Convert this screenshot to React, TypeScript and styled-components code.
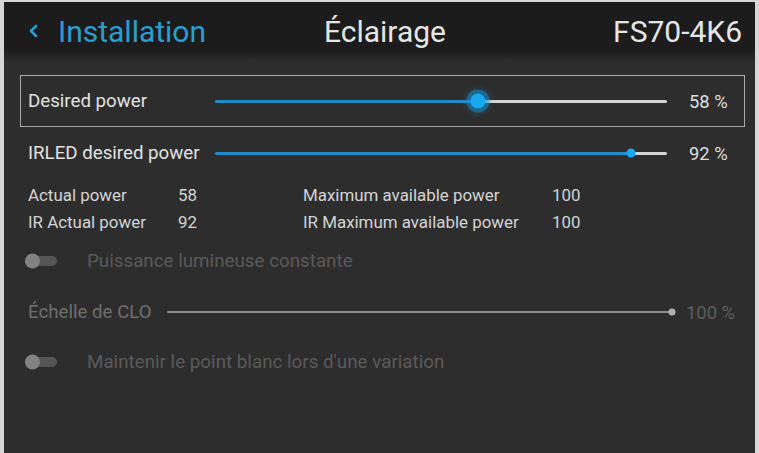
import React from "react";
import styled, { createGlobalStyle } from "styled-components";

const Global = createGlobalStyle`
  html, body { margin: 0; padding: 0; background: #d9d9d9; }
  body { font-family: Roboto, "Noto Sans", "Liberation Sans", sans-serif; }
`;

const Frame = styled.div`
  width: 759px;
  height: 453px;
  padding: 2px 4px 0 4px;
  box-sizing: border-box;
  background: #d6d6d6;
`;

const Screen = styled.div`
  height: 451px;
  background: #2d2d2d;
  display: flex;
  flex-direction: column;
  overflow: hidden;
`;

const Header = styled.header`
  height: 60px;
  flex: none;
  display: grid;
  grid-template-columns: 1fr auto 1fr;
  align-items: center;
  padding: 0 13px 2px 24px;
  box-sizing: border-box;
  background: linear-gradient(#1c1c1c 0, #1c1c1c 48px, #2d2d2d 60px);
`;

const Back = styled.div`
  display: flex;
  align-items: center;
  gap: 20px;
  color: #2b9dd4;
  font-size: 30px;
`;

const Title = styled.div`
  color: #e6e6e6;
  font-size: 30px;
`;

const Model = styled.div`
  justify-self: end;
  color: #e6e6e6;
  font-size: 30px;
`;

const Content = styled.div`
  padding: 13px 10px 0 16px;
  display: flex;
  flex-direction: column;
`;

const SliderRow = styled.div<{ $focused?: boolean; $labelW: number; $valueW: number; $h: number }>`
  height: ${(p) => p.$h}px;
  box-sizing: border-box;
  border: 1px solid ${(p) => (p.$focused ? "#a8a8a8" : "transparent")};
  display: grid;
  grid-template-columns: ${(p) => p.$labelW}px 1fr ${(p) => p.$valueW}px;
  align-items: center;
  padding: 0 0 0 7px;
`;

const Label = styled.span<{ $dim?: boolean }>`
  font-size: 18.7px;
  color: ${(p) => (p.$dim ? "#6e6e6e" : "#e2e2e2")};
  white-space: nowrap;
`;

const Value = styled.span<{ $dim?: boolean; $gap: number }>`
  font-size: 18.4px;
  padding-left: ${(p) => p.$gap}px;
  color: ${(p) => (p.$dim ? "#5e5e5e" : "#dedede")};
  white-space: nowrap;
`;

const Track = styled.div<{ $h: number }>`
  position: relative;
  height: ${(p) => p.$h}px;
  display: flex;
`;

const Fill = styled.div<{ $color: string }>`
  height: 100%;
  background: ${(p) => p.$color};
  border-radius: 2px;
`;

const Rest = styled.div<{ $color: string }>`
  flex: 1;
  height: 100%;
  background: ${(p) => p.$color};
  border-radius: 2px;
`;

const Thumb = styled.div<{ $size: number; $color: string; $glow?: boolean }>`
  position: absolute;
  top: 50%;
  width: ${(p) => p.$size}px;
  height: ${(p) => p.$size}px;
  border-radius: 50%;
  background: ${(p) => p.$color};
  transform: translate(-50%, -50%);
  box-shadow: ${(p) => (p.$glow ? "0 0 0 4px rgba(20,150,220,0.45), 0 0 6px 5px rgba(20,150,220,0.25)" : "none")};
`;

type SliderProps = {
  pct: number;
  fill: string;
  rest: string;
  thumb: string;
  size: number;
  h: number;
  glow?: boolean;
};

const Slider = ({ pct, fill, rest, thumb, size, h, glow }: SliderProps) => (
  <Track $h={h}>
    <Fill $color={fill} style={{ width: `${pct}%` }} />
    <Rest $color={rest} />
    <Thumb $size={size} $color={thumb} $glow={glow} style={{ left: `${pct}%` }} />
  </Track>
);

const InfoGrid = styled.div`
  display: grid;
  grid-template-columns: 150px 125px 249px auto;
  grid-auto-rows: 27px;
  align-items: center;
  padding: 2px 0 0 8px;
  margin-bottom: 7px;
`;

const Info = styled.span`
  font-size: 16.9px;
  color: #d4d4d4;
  white-space: nowrap;
`;

const ToggleRow = styled.div<{ $h: number }>`
  height: ${(p) => p.$h}px;
  display: flex;
  align-items: center;
  gap: 30px;
  padding-left: 5px;
`;

const Switch = styled.div`
  position: relative;
  width: 32px;
  height: 10px;
  border-radius: 5px;
  background: #555555;
  &::before {
    content: "";
    position: absolute;
    left: 0;
    top: 50%;
    width: 15px;
    height: 15px;
    border-radius: 50%;
    background: #828282;
    transform: translateY(-50%);
  }
`;

const DimText = styled.span`
  font-size: 18.8px;
  color: #5a5a5a;
  white-space: nowrap;
`;

const Chevron = () => (
  <svg width="10" height="14" viewBox="0 0 10 14">
    <path d="M8 2 L3 7 L8 12" fill="none" stroke="#2b9dd4" strokeWidth="2.6" strokeLinecap="round" strokeLinejoin="round" />
  </svg>
);

export default function App() {
  return (
    <>
      <Global />
      <Frame>
        <Screen>
          <Header>
            <Back>
              <Chevron />
              <span>Installation</span>
            </Back>
            <Title>Éclairage</Title>
            <Model>FS70-4K6</Model>
          </Header>
          <Content>
            <SliderRow $focused $labelW={187} $valueW={77} $h={52}>
              <Label>Desired power</Label>
              <Slider pct={58.2} fill="#1e8cc6" rest="#d4d4d4" thumb="#17a8f2" size={15} h={3} glow />
              <Value $gap={22}>58 %</Value>
            </SliderRow>
            <SliderRow $labelW={187} $valueW={77} $h={52}>
              <Label>IRLED desired power</Label>
              <Slider pct={92} fill="#1e8cc6" rest="#d4d4d4" thumb="#17a8f2" size={9} h={3} />
              <Value $gap={22}>92 %</Value>
            </SliderRow>
            <InfoGrid>
              <Info>Actual power</Info>
              <Info>58</Info>
              <Info>Maximum available power</Info>
              <Info>100</Info>
              <Info>IR Actual power</Info>
              <Info>92</Info>
              <Info>IR Maximum available power</Info>
              <Info>100</Info>
            </InfoGrid>
            <ToggleRow $h={38}>
              <Switch />
              <DimText>Puissance lumineuse constante</DimText>
            </ToggleRow>
            <SliderRow $labelW={139} $valueW={72} $h={64}>
              <Label $dim>Échelle de CLO</Label>
              <Slider pct={100} fill="#8c8c8c" rest="#8c8c8c" thumb="#b0b0b0" size={7} h={2} />
              <Value $dim $gap={14}>100 %</Value>
            </SliderRow>
            <ToggleRow $h={36}>
              <Switch />
              <DimText>Maintenir le point blanc lors d'une variation</DimText>
            </ToggleRow>
          </Content>
        </Screen>
      </Frame>
    </>
  );
}
